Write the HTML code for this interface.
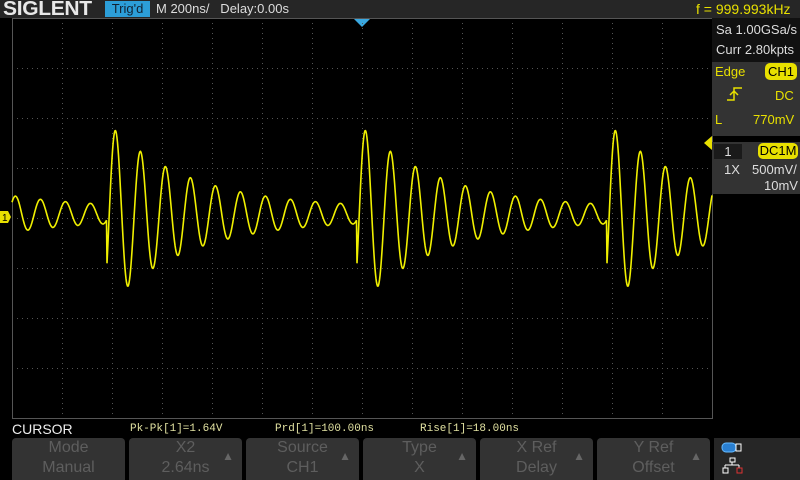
<!DOCTYPE html>
<html><head><meta charset="utf-8"><style>
body{margin:0;width:800px;height:480px;background:#000;overflow:hidden;position:relative;font-family:"Liberation Sans",sans-serif}
.a{position:absolute}
.top{left:0;top:0;width:800px;height:18px;background:#262626}
.btn{position:absolute;top:438px;width:113px;height:42px;background:#333;border-radius:4px 4px 0 0;color:#5e5e5e;font-size:16px;text-align:center;line-height:20px}
.btn .ar{position:absolute;right:8px;top:8px;color:#666;font-size:12px}
.rp{color:#ddd;font-size:13px}
</style></head><body>
<div class="a top"></div>
<div class="a" style="left:3px;top:-1px;color:#e8e8e8;font-weight:bold;font-size:20px;line-height:20px;letter-spacing:-0.3px;transform:scaleX(1.05);transform-origin:left">SIGLENT</div>
<div class="a" style="left:105px;top:1px;width:45px;height:16px;background:#2c9ed8;color:#123;font-size:13px;line-height:16px;text-align:center">Trig'd</div>
<div class="a" style="left:156px;top:1px;color:#ddd;font-size:13px;line-height:16px">M 200ns/&nbsp;&nbsp; Delay:0.00s</div>
<div class="a" style="left:696px;top:1px;color:#e8e000;font-size:14px;line-height:16px">f = 999.993kHz</div>
<svg class="a" style="left:0;top:0" width="800" height="480">
<polygon points="353,18 371,18 362,27" fill="#3aa8e0"/>
<g id="grid" stroke="#555" stroke-width="1" stroke-dasharray="1,4"></g>
<rect x="12.5" y="18.5" width="700" height="400" fill="none" stroke="#555"/>
<path id="w" fill="none" stroke="#f0f000" stroke-width="1.6"/>
<polygon points="0,211 8,211 11,217 8,223 0,223" fill="#e8e000"/>
<text x="2" y="221" font-size="10" fill="#000" font-family="Liberation Sans">1</text>
<polygon points="712,136 712,150 704,143" fill="#e8e000"/>
</svg>
<div class="a" style="left:712px;top:18px;width:88px;height:44px;background:#111"></div>
<div class="a rp" style="left:716px;top:22px">Sa 1.00GSa/s</div>
<div class="a rp" style="left:716px;top:42px">Curr 2.80kpts</div>
<div class="a" style="left:712px;top:62px;width:88px;height:74px;background:#333"></div>
<div class="a" style="left:715px;top:64px;color:#e8e000;font-size:13px">Edge</div>
<div class="a" style="left:765px;top:63px;width:32px;height:17px;background:#e8e000;border-radius:5px;color:#000;font-size:13px;line-height:17px;text-align:center">CH1</div>
<svg class="a" style="left:726px;top:86px" width="18" height="16"><path d="M1 14H8V2H16M4 9L8 5L12 9" stroke="#e8e000" stroke-width="1.5" fill="none"/></svg>
<div class="a" style="left:775px;top:88px;color:#e8e000;font-size:13px">DC</div>
<div class="a" style="left:715px;top:112px;color:#e8e000;font-size:13px">L</div>
<div class="a" style="left:753px;top:112px;color:#e8e000;font-size:13px">770mV</div>
<div class="a" style="left:712px;top:142px;width:88px;height:52px;background:#333"></div>
<div class="a" style="left:714px;top:144px;width:28px;height:15px;background:#1a1a1a;color:#ddd;font-size:13px;text-align:center;line-height:15px">1</div>
<div class="a" style="left:758px;top:143px;width:40px;height:16px;background:#e8e000;border-radius:5px;color:#000;font-size:13px;line-height:16px;text-align:center">DC1M</div>
<div class="a rp" style="left:724px;top:162px">1X</div>
<div class="a rp" style="left:752px;top:162px">500mV/</div>
<div class="a rp" style="left:764px;top:178px">10mV</div>
<div class="a" style="left:12px;top:421px;color:#eee;font-size:14px">CURSOR</div>
<div class="a" style="left:130px;top:423px;color:#e0e0a0;font-size:11px;font-family:'Liberation Mono',monospace">Pk-Pk[1]=1.64V</div>
<div class="a" style="left:275px;top:423px;color:#e0e0a0;font-size:11px;font-family:'Liberation Mono',monospace">Prd[1]=100.00ns</div>
<div class="a" style="left:420px;top:423px;color:#e0e0a0;font-size:11px;font-family:'Liberation Mono',monospace">Rise[1]=18.00ns</div>
<div class="btn" style="left:12px">Mode<br>Manual</div>
<div class="btn" style="left:129px">X2<br>2.64ns<span class="ar">▲</span></div>
<div class="btn" style="left:246px">Source<br>CH1<span class="ar">▲</span></div>
<div class="btn" style="left:363px">Type<br>X<span class="ar">▲</span></div>
<div class="btn" style="left:480px">X Ref<br>Delay<span class="ar">▲</span></div>
<div class="btn" style="left:597px">Y Ref<br>Offset<span class="ar">▲</span></div>
<div class="a" style="left:714px;top:438px;width:86px;height:42px;background:#262626"></div>
<svg class="a" style="left:720px;top:440px" width="30" height="38">
<rect x="2" y="3" width="14" height="9" rx="4" fill="#2a7fd0" stroke="#6bf" stroke-width="1"/>
<rect x="16" y="4" width="5" height="7" fill="none" stroke="#fff"/>
<path d="M10 18h5v4h-5zM12 22v3M5 25h14M5 25v3M19 25v3M3 28h5v5H3z" stroke="#fff" fill="none"/>
<rect x="17" y="28" width="5" height="5" fill="none" stroke="#d33"/>
</svg>
<script>
var g=document.getElementById('grid'),s='';
for(var x=62;x<712;x+=50)s+='<line x1="'+x+'.5" y1="18" x2="'+x+'.5" y2="418"/>';
for(var y=68;y<418;y+=50)s+='<line x1="12" y1="'+y+'.5" x2="712" y2="'+y+'.5"/>';
g.innerHTML=s;
var d='',starts=[-143,107,357,607];
for(var x=12;x<=712;x+=0.5){
 var x0=-143;for(var i=0;i<starts.length;i++)if(x>=starts[i])x0=starts[i];
 var t=x-x0;var A=6+86*Math.exp(-t/80);
 var yy=214-A*Math.cos(2*Math.PI*(t-8.5)/25);
 d+=(d?'L':'M')+x.toFixed(1)+' '+yy.toFixed(1);
}
document.getElementById('w').setAttribute('d',d);
</script>
</body></html>
